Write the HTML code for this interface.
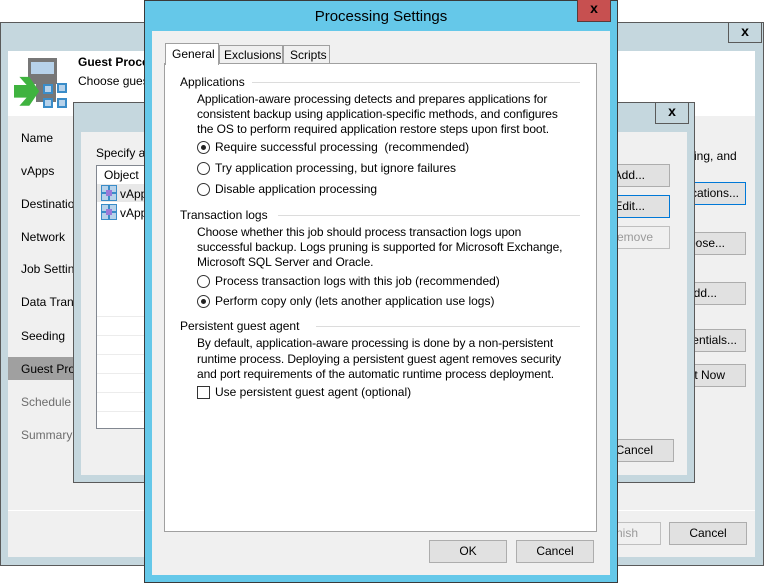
<!DOCTYPE html>
<html><head><style>
*{box-sizing:border-box;margin:0;padding:0}
body{width:768px;height:583px;background:#fff;position:relative;overflow:hidden;font-family:"Liberation Sans",sans-serif;font-size:12px;color:#000}
.a{position:absolute}
.btn{position:absolute;background:#e1e1e1;border:1px solid #adadad;text-align:center;line-height:20px;font-size:12px;white-space:nowrap;overflow:hidden}
.x{position:absolute;border:1px solid #5a5a5a;text-align:center;font-weight:bold;font-size:14px;line-height:17px}
.t{position:absolute;white-space:nowrap}
.p{letter-spacing:-0.1px}
.r{position:absolute;width:13px;height:13px;border:1px solid #333;border-radius:50%;background:#fff}
.r.on::after{content:"";position:absolute;left:3px;top:3px;width:5px;height:5px;border-radius:50%;background:#222}
.ln{position:absolute;height:1px;background:#dcdcdc}
.row{position:absolute;left:97px;width:59px;height:1px;background:#ececec}
</style></head><body>
<!-- back wizard -->
<div class="a" style="left:0;top:22px;width:764px;height:544px;background:#c5d7de;border:1px solid #5a5a5a"></div>
<div class="x" style="left:728px;top:22px;width:34px;height:21px">x</div>
<div class="a" style="left:8px;top:51px;width:747px;height:506px;background:#f0f0f0"></div>
<div class="a" style="left:8px;top:51px;width:747px;height:65px;background:#fff"></div>
<div class="a" style="left:28px;top:58px;width:29px;height:26px;background:#777"></div>
<div class="a" style="left:31px;top:62px;width:23px;height:12px;background:#b7d2ea"></div>
<div class="a" style="left:36px;top:84px;width:20px;height:18px;background:#777"></div>
<svg class="a" style="left:14px;top:76px" width="54" height="34"><path d="M0 10h14l-8-9h11l11 16-11 16H6l8-9H0z" fill="#3fb33f" transform="scale(0.9)"/><g fill="#b7d2ea" stroke="#3a8cc8" stroke-width="2"><rect x="30" y="9" width="8" height="8"/><rect x="44" y="8" width="8" height="8"/><rect x="30" y="23" width="8" height="8"/><rect x="44" y="23" width="8" height="8"/></g></svg>
<div class="t" style="left:78px;top:55px;font-weight:bold">Guest Proce</div>
<div class="t" style="left:78px;top:74px">Choose gues</div>
<div class="t" style="left:21px;top:131px">Name</div>
<div class="t" style="left:21px;top:164px">vApps</div>
<div class="t" style="left:21px;top:197px">Destination</div>
<div class="t" style="left:21px;top:230px">Network</div>
<div class="t" style="left:21px;top:262px">Job Settin</div>
<div class="t" style="left:21px;top:295px">Data Tran</div>
<div class="t" style="left:21px;top:329px">Seeding</div>
<div class="a" style="left:8px;top:357px;width:70px;height:23px;background:#a0a0a0"></div>
<div class="t" style="left:21px;top:362px">Guest Pro</div>
<div class="t" style="left:21px;top:395px;color:#6d6d6d">Schedule</div>
<div class="t" style="left:21px;top:428px;color:#6d6d6d">Summary</div>
<div class="a" style="left:8px;top:510px;width:747px;height:1px;background:#fff"></div>
<div class="t" style="left:688px;top:149px">sing, and</div>
<div class="btn" style="left:660px;top:182px;width:86px;height:23px;border-color:#0078d7;text-align:right;padding-right:6px">ications...</div>
<div class="btn" style="left:660px;top:232px;width:86px;height:23px;text-align:right;padding-right:20px">oose...</div>
<div class="btn" style="left:660px;top:282px;width:86px;height:23px;text-align:right;padding-right:28px">dd...</div>
<div class="btn" style="left:660px;top:329px;width:86px;height:23px;text-align:right;padding-right:8px">entials...</div>
<div class="btn" style="left:660px;top:364px;width:86px;height:23px;text-align:right;padding-right:20px">t Now</div>
<div class="btn" style="left:590px;top:522px;width:71px;height:23px;background:#f0f0f0;border-color:#bfbfbf;color:#9a9a9a;text-align:right;padding-right:22px">nish</div>
<div class="btn" style="left:669px;top:522px;width:78px;height:23px">Cancel</div>
<!-- middle dialog -->
<div class="a" style="left:73px;top:102px;width:622px;height:381px;background:#c5d7de;border:1px solid #5a5a5a"></div>
<div class="x" style="left:655px;top:102px;width:34px;height:22px">x</div>
<div class="a" style="left:81px;top:132px;width:606px;height:343px;background:#f0f0f0"></div>
<div class="t" style="left:96px;top:146px">Specify a</div>
<div class="a" style="left:96px;top:165px;width:60px;height:264px;background:#fff;border:1px solid #828790"></div>
<div class="row" style="top:316px"></div><div class="row" style="top:335px"></div><div class="row" style="top:354px"></div><div class="row" style="top:373px"></div><div class="row" style="top:392px"></div><div class="row" style="top:411px"></div>
<div class="t" style="left:104px;top:168px">Object</div>
<div class="a" style="left:97px;top:184px;width:59px;height:18px;background:#e8e8e8"></div>
<svg class="a" style="left:101px;top:185px" width="17" height="36"><g fill="#b7d2ea" stroke="#3a8cc8"><rect x="0.5" y="0.5" width="7" height="7"/><rect x="8.5" y="0.5" width="7" height="7"/><rect x="0.5" y="8.5" width="7" height="7"/><rect x="8.5" y="8.5" width="7" height="7"/><rect x="0.5" y="19.5" width="7" height="7"/><rect x="8.5" y="19.5" width="7" height="7"/><rect x="0.5" y="27.5" width="7" height="7"/><rect x="8.5" y="27.5" width="7" height="7"/></g><rect x="5" y="5" width="6" height="6" fill="#9a7ad8"/><rect x="5" y="24" width="6" height="6" fill="#9a7ad8"/></svg>
<div class="t" style="left:120px;top:187px">vApp</div>
<div class="t" style="left:120px;top:206px">vApp</div>
<div class="btn" style="left:600px;top:164px;width:70px;height:23px;text-align:right;padding-right:24px">Add...</div>
<div class="btn" style="left:600px;top:195px;width:70px;height:23px;border-color:#0078d7;text-align:right;padding-right:24px">Edit...</div>
<div class="btn" style="left:600px;top:226px;width:70px;height:23px;background:#f0f0f0;border-color:#bfbfbf;color:#9a9a9a;text-align:right;padding-right:16px">emove</div>
<div class="btn" style="left:600px;top:439px;width:74px;height:23px;text-align:right;padding-right:20px">Cancel</div>
<!-- front dialog -->
<div class="a" style="left:144px;top:0;width:474px;height:583px;background:#65c8e9;border:1px solid #3a3a3a"></div>
<div class="t" style="left:144px;top:8px;width:474px;text-align:center;font-size:15px">Processing Settings</div>
<div class="x" style="left:577px;top:0;width:34px;height:22px;background:#c75050;border-color:#5a3a3a;border-top:none">x</div>
<div class="a" style="left:152px;top:31px;width:458px;height:544px;background:#f0f0f0"></div>
<div class="a" style="left:164px;top:63px;width:433px;height:469px;background:#fff;border:1px solid #a0a0a0"></div>
<div class="a" style="left:165px;top:43px;width:54px;height:22px;background:#fff;border:1px solid #a0a0a0;border-bottom:none"></div>
<div class="t" style="left:172px;top:47px">General</div>
<div class="a" style="left:219px;top:45px;width:64px;height:19px;background:#f0f0f0;border:1px solid #a0a0a0"></div>
<div class="t" style="left:224px;top:48px">Exclusions</div>
<div class="a" style="left:283px;top:45px;width:47px;height:19px;background:#f0f0f0;border:1px solid #a0a0a0"></div>
<div class="t" style="left:290px;top:48px">Scripts</div>
<div class="t" style="left:180px;top:75px">Applications</div><div class="ln" style="left:252px;top:82px;width:328px"></div>
<div class="t p" style="left:197px;top:92px;line-height:15px">Application-aware processing detects and prepares applications for<br>consistent backup using application-specific methods, and configures<br>the OS to perform required application restore steps upon first boot.</div>
<div class="r on" style="left:197px;top:141px"></div><div class="t" style="left:215px;top:140px">Require successful processing &nbsp;(recommended)</div>
<div class="r" style="left:197px;top:162px"></div><div class="t" style="left:215px;top:161px">Try application processing, but ignore failures</div>
<div class="r" style="left:197px;top:183px"></div><div class="t" style="left:215px;top:182px">Disable application processing</div>
<div class="t" style="left:180px;top:208px">Transaction logs</div><div class="ln" style="left:278px;top:215px;width:302px"></div>
<div class="t p" style="left:197px;top:225px;line-height:15px">Choose whether this job should process transaction logs upon<br>successful backup. Logs pruning is supported for Microsoft Exchange,<br>Microsoft SQL Server and Oracle.</div>
<div class="r" style="left:197px;top:275px"></div><div class="t" style="left:215px;top:274px">Process transaction logs with this job (recommended)</div>
<div class="r on" style="left:197px;top:295px"></div><div class="t" style="left:215px;top:294px">Perform copy only (lets another application use logs)</div>
<div class="t" style="left:180px;top:319px">Persistent guest agent</div><div class="ln" style="left:316px;top:326px;width:264px"></div>
<div class="t p" style="left:197px;top:336px;line-height:15.5px">By default, application-aware processing is done by a non-persistent<br>runtime process. Deploying a persistent guest agent removes security<br>and port requirements of the automatic runtime process deployment.</div>
<div class="a" style="left:197px;top:386px;width:13px;height:13px;border:1px solid #333;background:#fff"></div><div class="t" style="left:215px;top:385px">Use persistent guest agent (optional)</div>
<div class="btn" style="left:429px;top:540px;width:78px;height:23px">OK</div>
<div class="btn" style="left:516px;top:540px;width:78px;height:23px">Cancel</div>
</body></html>
